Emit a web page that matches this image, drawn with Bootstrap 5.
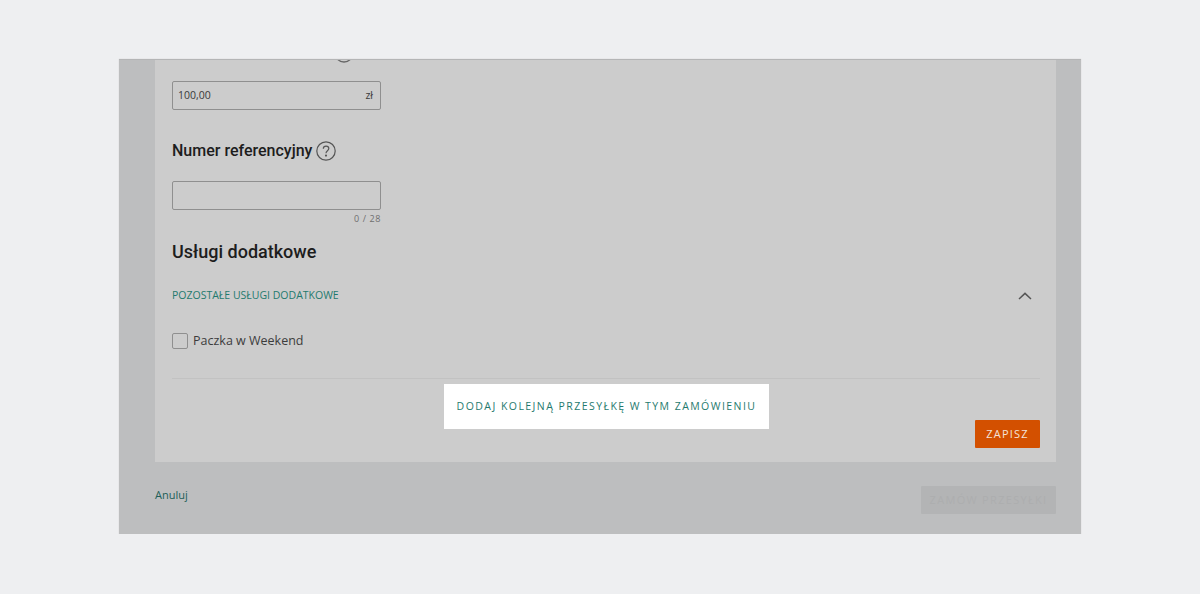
<!DOCTYPE html>
<html lang="pl">
<head>
  <meta charset="UTF-8" />
  <title>Dodaj przesyłkę</title>
  <meta name="viewport" content="width=device-width, initial-scale=1" />
  <link href="https://cdn.jsdelivr.net/npm/bootstrap@5.3.3/dist/css/bootstrap.min.css" rel="stylesheet" />
  <style>
    body {
      background: #eeeff1;
      font-family: "Open Sans", sans-serif;
      overflow: hidden;
    }
    .frame {
      width: 962px;
      height: 475px;
      margin: 59px 0 0 119px;
      padding: 0 25px 0 36px;
      background: #bdbebf;
      border-top: 1px solid #b4b5b6;
      box-shadow: 0 0 1px #c8c9ca;
    }
    .sheet {
      height: 402px;
      padding: 0 16px 0 17px;
      background: #cccccc;
    }
    .clipped-hint {
      height: 3px;
      margin-left: 162px;
      overflow: hidden;
    }
    .clipped-hint svg {
      display: block;
      margin-top: -17px;
    }
    .amount-box {
      width: 209px;
      height: 29px;
      margin-top: 18px;
      padding: 0 7px 0 5px;
      color: #3a3a3a;
      font-size: 10.5px;
      background: transparent;
      border: 1px solid #8f8f8f;
      border-radius: 2px;
    }
    .field-title {
      margin: 30px 0 19px;
      color: #1d1d1d;
      font: 500 16px/22px Roboto, sans-serif;
    }
    .ref-input {
      width: 209px;
      height: 29px;
      background: transparent;
      border: 1px solid #8f8f8f;
      border-radius: 2px;
    }
    .ref-count {
      width: 209px;
      height: 15px;
      color: #6f6f6f;
      font-size: 9px;
      line-height: 18px;
      letter-spacing: .6px;
      text-align: right;
    }
    .extras-title {
      margin: 14px 0 0;
      color: #1d1d1d;
      font: 500 18px/26px Roboto, sans-serif;
    }
    .extras-toggle {
      height: 22px;
      margin-top: 20px;
      padding-right: 8px;
      color: #1f7a6e;
      font-size: 10.5px;
    }
    .weekend-row {
      height: 18px;
      margin-top: 25px;
      gap: 5px;
      color: #3c3c3c;
      font-size: 12.5px;
    }
    .weekend-row .form-check-input {
      width: 16px;
      height: 16px;
      margin: 0;
      background-color: transparent;
      border: 1px solid #8f8f8f;
      border-radius: 2px;
    }
    .sheet-rule {
      margin: 28px 0 5px;
      border-top: 1px solid #c2c2c2;
      opacity: 1;
    }
    .add-parcel {
      width: 325px;
      height: 45px;
      margin-left: 272px;
      color: #1f7a6e;
      font-size: 10.5px;
      letter-spacing: 1.45px;
      background: #fff;
      border: 0;
      border-radius: 0;
    }
    .save-btn {
      width: 65px;
      height: 28px;
      margin-top: 36px;
      padding: 0;
      color: #f4e3d8;
      font-size: 11px;
      letter-spacing: 1.2px;
      background: #d35000;
      border: 0;
      border-radius: 1px;
    }
    .frame-foot {
      padding-top: 24px;
    }
    .cancel-link {
      margin-top: 1px;
      color: #1d5f58;
      font-size: 11px;
      text-decoration: none;
    }
    .order-btn {
      width: 135px;
      height: 28px;
      padding: 0;
      color: #adaeaf;
      font-size: 11px;
      letter-spacing: 1.3px;
      background: #b3b4b5;
      border: 0;
      border-radius: 1px;
    }
  </style>
</head>
<body>
  <div class="frame">
    <div class="sheet">
      <div class="clipped-hint">
        <svg width="20" height="20" viewBox="0 0 20 20" fill="none" stroke="#666" stroke-width="1.3"><circle cx="10" cy="10" r="9" /></svg>
      </div>

      <div class="amount-box d-flex align-items-center justify-content-between">
        <span>100,00</span>
        <span>zł</span>
      </div>

      <div class="field-title d-flex align-items-center gap-1">
        <span>Numer referencyjny</span>
        <svg width="20" height="20" viewBox="0 0 20 20" fill="none" stroke="#555" stroke-width="1.2">
          <circle cx="10" cy="10" r="9.2" />
          <path d="M7.3 7.8c0-1.6 1.2-2.7 2.8-2.7s2.7 1 2.7 2.4c0 2.2-2.8 2.2-2.8 4.7" />
          <circle cx="10" cy="14.6" r=".5" fill="#555" />
        </svg>
      </div>

      <input class="ref-input form-control" type="text" />
      <div class="ref-count">0 / 28</div>

      <h2 class="extras-title">Usługi dodatkowe</h2>

      <div class="extras-toggle d-flex align-items-center justify-content-between">
        <span>POZOSTAŁE USŁUGI DODATKOWE</span>
        <svg width="14" height="8" viewBox="0 0 14 8" fill="none" stroke="#555" stroke-width="1.5"><path d="M1 7l6-5.6L13 7" /></svg>
      </div>

      <label class="weekend-row d-flex align-items-center">
        <input class="form-check-input" type="checkbox" />
        <span>Paczka w Weekend</span>
      </label>

      <hr class="sheet-rule" />

      <div class="d-flex justify-content-between align-items-start">
        <button class="add-parcel btn" type="button">DODAJ KOLEJNĄ PRZESYŁKĘ W TYM ZAMÓWIENIU</button>
        <button class="save-btn btn" type="button">ZAPISZ</button>
      </div>
    </div>

    <div class="frame-foot d-flex justify-content-between align-items-start">
      <a class="cancel-link" href="#">Anuluj</a>
      <button class="order-btn btn" type="button">ZAMÓW PRZESYŁKI</button>
    </div>
  </div>

  <script src="https://cdn.jsdelivr.net/npm/bootstrap@5.3.3/dist/js/bootstrap.bundle.min.js"></script>
</body>
</html>
